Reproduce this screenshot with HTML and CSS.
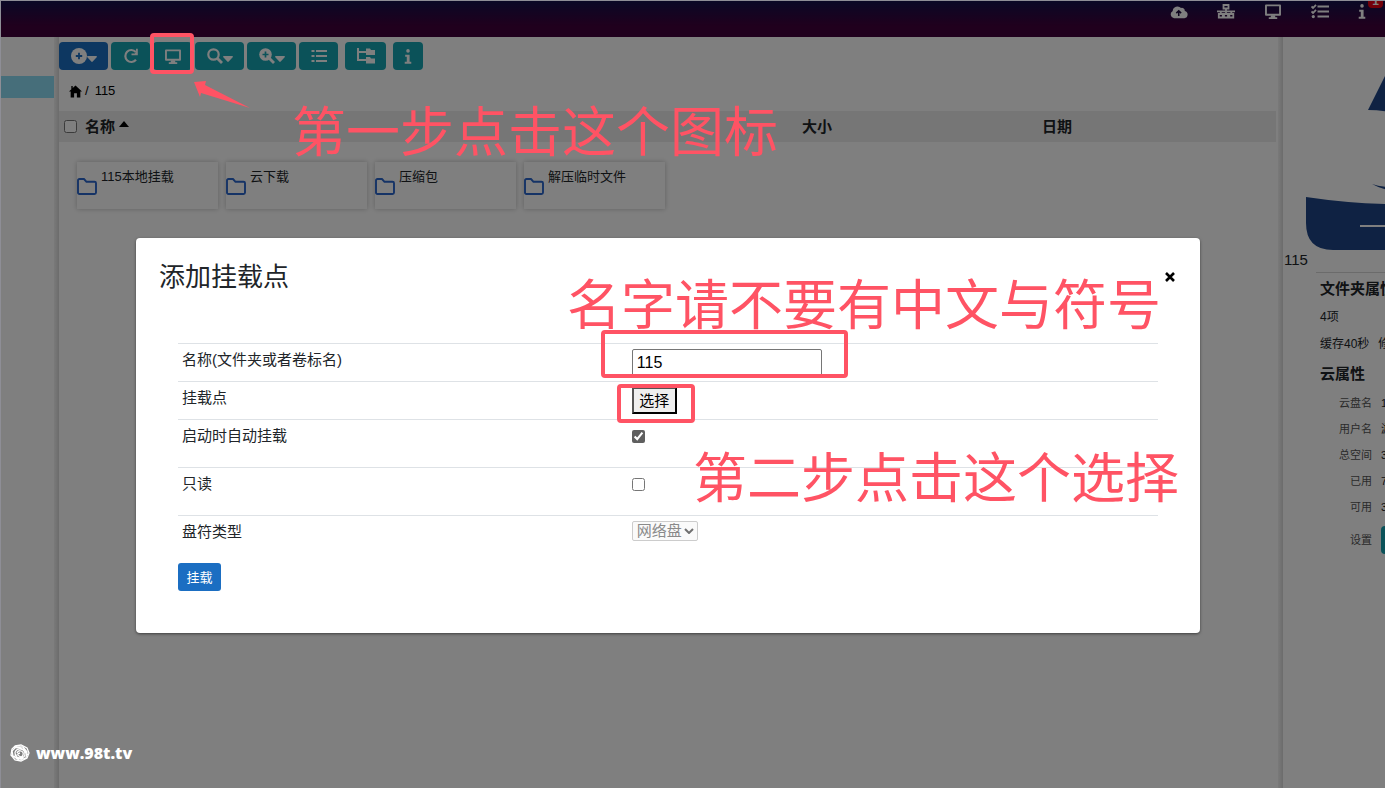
FILE: index.html
```
<!DOCTYPE html>
<html lang="zh-CN">
<head>
<meta charset="utf-8">
<title>添加挂载点</title>
<link rel="stylesheet" href="styles.css">
</head>
<body>
<svg class="defs" aria-hidden="true">
  <symbol id="i-monitor" viewBox="0 0 18 16"><path fill="none" stroke="currentColor" stroke-width="2" stroke-linejoin="round" d="M1.500 1.500h15v10h-15z"/><path fill="currentColor" d="M7 12h4l.6 2.200H13.500V16h-9v-1.800h1.900z"/></symbol>
  <symbol id="i-caret" viewBox="0 0 10 6"><path fill="currentColor" d="M.8 0h8.400c.7 0 1 .8.5 1.300L5.700 5.600c-.4.4-1 .4-1.400 0L.3 1.300C-.2.800.1 0 .8 0z"/></symbol>
  <symbol id="i-info" viewBox="0 0 8 16"><circle cx="4" cy="2" r="1.900" fill="currentColor"/><path fill="currentColor" d="M1 6h4.700v7.500H7.500v2.200H.5v-2.200h2.200V8.200H1z"/></symbol>
  <symbol id="i-folder" viewBox="0 0 20 17"><path fill="none" stroke="currentColor" stroke-width="1.900" stroke-linejoin="round" d="M1 2.500Q1 1 2.500 1H7l2.500 2.800h8Q19 3.800 19 5v9.500q0 1.500-1.500 1.500h-15Q1 16 1 14.500z"/></symbol>
</svg>
<div class="app">
  <header class="topbar">
    <nav class="topnav">
      <a href="#" aria-label="上传"><svg class="ic-cloud" viewBox="0 0 20 15"><path fill="currentColor" d="M16.500 6.300A3.300 3.300 0 0 0 12.300 3 5.400 5.400 0 0 0 3 6.300 4.400 4.400 0 0 0 4.500 14.500H16a4.200 4.200 0 0 0 .5-8.200z"/><path d="M9.700 12V6.500M7 8.800l2.700-2.600 2.700 2.600" fill="none" stroke="#1c0b3c" stroke-width="1.700"/></svg></a>
      <a href="#" aria-label="网络"><svg class="ic-18" viewBox="0 0 18 15"><g fill="none" stroke="currentColor" stroke-width="1.800"><path d="M6.500 1h5v3.500h-5zM1.800 10h4v3.500h-4zM7 10h4v3.500H7zM12.300 10h4v3.500h-4zM9 4.500V10M0 7.300h18M3.800 7.300V10M14.300 7.300V10"/></g></svg></a>
      <a href="#" aria-label="挂载"><svg class="ic-18"><use href="#i-monitor"/></svg></a>
      <a href="#" aria-label="任务"><svg class="ic-18" viewBox="0 0 18 15"><path fill="none" stroke="currentColor" stroke-width="1.800" d="M6.500 2.500H18M6.500 7.500H18M6.500 12.500H18M.5 2.500l1.500 1.500L5 .8M.5 7.500L2 9l3-3.200"/><circle cx="2.300" cy="12.600" r="1.600" fill="currentColor"/></svg></a>
      <a href="#" aria-label="信息" class="with-badge"><svg class="ic-info"><use href="#i-info"/></svg><span class="badge">1</span></a>
    </nav>
  </header>
  <div class="body">
    <aside class="tree"><div class="tree-active"></div></aside>
    <div class="splitter"></div>
    <main class="main">
      <div class="toolbar">
        <div class="tool-group">
          <button class="tool wide primary" aria-label="新建"><svg class="ic-16" viewBox="0 0 16 16"><circle cx="8" cy="8" r="8" fill="currentColor"/><path d="M8 4.800v6.400M4.800 8h6.400" stroke="#1b6ec2" stroke-width="1.800"/></svg><svg class="caret"><use href="#i-caret"/></svg></button>
          <button class="tool" aria-label="刷新"><svg class="ic-16" viewBox="0 0 16 16"><path d="M13 11.800A6 6 0 1 1 12.800 4" fill="none" stroke="currentColor" stroke-width="2.200"/><path fill="currentColor" d="M14.800.8v6.400H8.500V5.600h3.300l1.200-2.200V.8z"/></svg></button>
          <button class="tool" aria-label="挂载"><svg class="ic-18"><use href="#i-monitor"/></svg></button>
          <button class="tool wide" aria-label="搜索"><svg class="ic-16" viewBox="0 0 16 16"><circle cx="6.500" cy="6.500" r="5.200" fill="none" stroke="currentColor" stroke-width="2.200"/><path d="M10.500 10.500l4.500 4.500" stroke="currentColor" stroke-width="2.800"/></svg><svg class="caret"><use href="#i-caret"/></svg></button>
          <button class="tool wide" aria-label="缩放"><svg class="ic-16" viewBox="0 0 16 16"><circle cx="6.500" cy="6.500" r="6.300" fill="currentColor"/><path d="M6.500 3.500v6M3.500 6.500h6" stroke="#16a4b2" stroke-width="1.700"/><path d="M10.500 10.500l4.500 4.500" stroke="currentColor" stroke-width="2.800"/></svg><svg class="caret"><use href="#i-caret"/></svg></button>
          <button class="tool" aria-label="列表"><svg class="ic-16" viewBox="0 0 16 16"><path d="M5 3h11M5 8h11M5 13h11M.5 3h3M.5 8h3M.5 13h3" stroke="currentColor" stroke-width="2.200"/></svg></button>
        </div>
        <button class="tool" aria-label="目录树"><svg class="ic-tree" viewBox="0 0 18 16"><path d="M1 0v12h8M1 4h8" fill="none" stroke="currentColor" stroke-width="2"/><path fill="currentColor" d="M9 .5h4l1 1.500h4V7H9zM9 9h4l1 1.500h4v5H9z"/></svg></button>
        <button class="tool slim" aria-label="信息"><svg class="ic-info"><use href="#i-info"/></svg></button>
      </div>
      <nav class="crumbs"><a href="#" aria-label="主页"><svg class="ic-home" viewBox="0 0 14 13"><path d="M7 0l7 6.500h-1.800V13H8.500V8.500h-3V13H1.800V6.500H0L4 2.800V.5H2.500V4z"/></svg></a><span>/</span><a href="#">115</a></nav>
      <div class="list-head">
        <div class="col-name"><input type="checkbox" aria-label="全选"><span>名称</span><svg class="sort" viewBox="0 0 10 6"><path d="M0 6L5 0l5 6z"/></svg></div>
        <div>大小</div>
        <div>日期</div>
      </div>
      <div class="files">
        <div class="file"><svg><use href="#i-folder"/></svg><span>115本地挂载</span></div>
        <div class="file"><svg><use href="#i-folder"/></svg><span>云下载</span></div>
        <div class="file"><svg><use href="#i-folder"/></svg><span>压缩包</span></div>
        <div class="file"><svg><use href="#i-folder"/></svg><span>解压临时文件</span></div>
      </div>
    </main>
    <div class="splitter"></div>
    <aside class="details">
      <svg class="logo" viewBox="0 0 200 190"><path fill="#1e4587" d="M62 50L87 0v53Q75 50 62 50zM66 124q14 5 34 2v5q-20 1-34-7zM0 137q60 9 120 7t80-14v33q0 27-27 27H27Q0 190 0 163z"/><path d="M54 166h80" stroke="#fff" stroke-width="2"/></svg>
      <p class="item-name">115</p>
      <section class="props">
        <h2>文件夹属性</h2>
        <p>4项</p>
        <p><span>缓存40秒</span><span>修改</span></p>
        <h2>云属性</h2>
        <dl>
          <dt>云盘名</dt><dd>115</dd>
          <dt>用户名</dt><dd>游</dd>
          <dt>总空间</dt><dd>3</dd>
          <dt>已用</dt><dd>7</dd>
          <dt>可用</dt><dd>3</dd>
          <dt class="tall">设置</dt><dd class="tall"><button class="tool" aria-label="设置"></button></dd>
        </dl>
      </section>
    </aside>
  </div>
</div>

<div class="overlay">
  <form class="modal">
    <div class="modal-head">
      <h1>添加挂载点</h1>
      <button type="button" class="close" aria-label="关闭"><svg viewBox="0 0 10 10"><path d="M1 1l8 8M9 1l-8 8" stroke="#000" stroke-width="2.600"/></svg></button>
    </div>
    <table class="fields">
      <tr><th><label for="name">名称(文件夹或者卷标名)</label></th><td><input id="name" type="text" value="115"></td></tr>
      <tr><th><label for="pick">挂载点</label></th><td><button id="pick" type="button" class="pick">选择</button></td></tr>
      <tr class="roomy"><th><label for="auto">启动时自动挂载</label></th><td><input id="auto" type="checkbox" checked></td></tr>
      <tr class="roomy"><th><label for="ro">只读</label></th><td><input id="ro" type="checkbox"></td></tr>
      <tr class="roomy"><th><label for="kind">盘符类型</label></th><td><span class="select"><select id="kind" disabled><option>网络盘</option></select><svg viewBox="0 0 10 6"><path d="M1 1l4 4 4-4" fill="none" stroke="#707070" stroke-width="2"/></svg></span></td></tr>
    </table>
    <button type="button" class="submit">挂载</button>
  </form>
</div>

<div class="mark box-icon"></div>
<div class="mark box-name"></div>
<div class="mark box-pick"></div>
<svg class="arrow" viewBox="0 0 56 27"><path fill="#ff5364" d="M0 1l12-1-1 4 45 23L7 12l-1 4z"/></svg>
<p class="note note-one">第一步点击这个图标</p>
<p class="note note-name">名字请不要有中文与符号</p>
<p class="note note-two">第二步点击这个选择</p>
<div class="watermark"><svg viewBox="0 0 20 18"><g fill="none" stroke="#fff" stroke-width="1.300"><path d="M5 2l6-1 6 3 2 5-2 5-6 3-6-1-4-5 1-6z"/><path d="M2 7l4-4 7 0 4 5-1 6-7 2-6-4zM5 8q2-4 6-3t4 5-5 4-5-6M7 9q1-3 4-2t2 4-4 1 1-3M1 11l5 3 7 1M4 3l9 2 5 6M3 13l4-2"/></g></svg><span>www.98t.tv</span></div>
</body>
</html>
```
FILE: styles.css
```
* { box-sizing: border-box; }
body {
  margin: 0;
  position: relative;
  height: 100vh;
  overflow: hidden;
  font: 13px/20px "Liberation Sans", "Noto Sans CJK SC", sans-serif;
  color: #212529;
}
h1, h2, p, dl, dd { margin: 0; }
button, input, select { font-family: inherit; }
a { color: inherit; text-decoration: none; }
svg { display: block; flex: none; }
.defs { position: absolute; width: 0; height: 0; }

.app { display: flex; flex-direction: column; height: 100%; }
.topbar {
  height: 37px;
  flex: none;
  display: flex;
  justify-content: flex-end;
  background: linear-gradient(#12124c, #40003a 70%);
  color: #fff;
}
.topnav { display: flex; gap: 29px; padding: 3px 19px 0 0; height: 20px; align-items: center; }
.with-badge { position: relative; }
.badge {
  position: absolute;
  left: 10px;
  top: -11px;
  width: 15px;
  height: 15px;
  border-radius: 4px;
  background: #e60012;
  font: bold 12px/16px "Liberation Sans", sans-serif;
  text-align: center;
}
.ic-16 { width: 16px; height: 16px; }
.ic-18 { width: 18px; height: 15px; }
.ic-tree { width: 18px; height: 16px; }
.ic-cloud { width: 18px; height: 14px; }
.ic-info { width: 8px; height: 15px; }
.caret { width: 10px; height: 6px; margin-top: 5px; }

.body { flex: 1; display: flex; min-height: 0; }
.tree { width: 54px; flex: none; padding-top: 39px; }
.tree-active { height: 22px; background: #8ddcf5; }
.splitter { width: 5px; flex: none; background: linear-gradient(90deg, #f4f4f4, #d8d8d8); }
.main { flex: 1; min-width: 0; }
.main + .splitter { margin-left: 2px; }

.toolbar { display: flex; gap: 7px; padding-top: 5px; }
.tool-group { display: flex; gap: 3px; }
.tool {
  display: flex;
  align-items: center;
  justify-content: center;
  flex: none;
  width: 39px;
  height: 28px;
  padding: 0;
  border: 0;
  border-radius: 4px;
  background: #16a4b2;
  color: #fff;
}
.tool-group + .tool { width: 41px; }
.tool.wide { width: 49px; }
.tool.slim { width: 30px; }
.tool.primary { background: #1b6ec2; }

.crumbs { display: flex; align-items: center; gap: 3px; padding: 11px 10px 10px; color: #000; }
.crumbs span { margin-right: 3px; }
.ic-home { width: 13px; height: 13px; }

.list-head {
  display: grid;
  grid-template-columns: 743fr 240fr 234fr;
  height: 31px;
  align-items: center;
  background: #ececec;
  font-size: 15px;
  font-weight: bold;
}
.list-head input { width: 13px; height: 13px; margin: 0 4px 0 0; }
.col-name { display: flex; align-items: center; gap: 4px; padding-left: 5px; }
.sort { width: 10px; height: 6px; margin-bottom: 6px; }

.files { display: flex; flex-wrap: wrap; gap: 8px; padding: 20px 18px; }
.file {
  display: flex;
  gap: 4px;
  width: 141px;
  height: 47px;
  padding-top: 5px;
  box-shadow: 0 0 5px rgba(0, 0, 0, .25);
}
.file svg { width: 20px; height: 17px; margin-top: 11px; color: #2a66cc; }

.details { width: 102px; flex: none; overflow: hidden; white-space: nowrap; border-left: 1px solid #fff; }
.logo { width: 200px; height: 190px; margin: 23px 0 0 22px; }
.item-name { font-size: 15px; }
.props { margin: 2px 0 0 32px; padding: 6px 0 0 4px; border-top: 1px solid #d6d6d6; width: 240px; font-size: 12px; }
.props h2 { font-size: 15px; line-height: 20px; margin-bottom: 5px; }
.props p { line-height: 27px; }
.props p span { margin-right: 9px; }
.props p + h2 { margin-top: 6px; }
.props dl { display: grid; grid-template-columns: 52px 1fr; column-gap: 9px; padding-top: 1px; font-size: 11px; line-height: 26px; }
.props dt { text-align: right; color: #555; }
.props .tall { line-height: 40px; }
.props dd .tool { margin-top: 6px; }

.overlay {
  position: absolute;
  inset: 0;
  background: rgba(0, 0, 0, .5);
  border: 1px solid #8e8e96;
  border-width: 1px 0 0 1px;
  padding: 237px 185px 0 135px;
}
.modal {
  background: #fff;
  border-radius: 4px;
  box-shadow: 0 1px 3px rgba(0, 0, 0, .5);
  padding: 24px 24px 42px;
}
.modal-head { display: flex; justify-content: space-between; align-items: center; height: 30px; margin: 0 0 51px -1px; }
.modal h1 { font-size: 26px; line-height: 30px; font-weight: 400; }
.close { padding: 0; border: 0; background: none; margin-right: 1px; }
.close svg { width: 10px; height: 10px; }
.fields { width: calc(100% - 36px); margin: 0 18px; border-collapse: separate; border-spacing: 0; font-size: 15px; }
.fields th, .fields td { border-top: 1px solid #dee2e6; padding: 5px 3px; vertical-align: top; text-align: left; font-weight: 400; }
.fields th { width: 46%; padding-left: 4px; line-height: 22px; }
.roomy { height: 48px; }
.fields input[type="text"] { display: block; width: 190px; height: 27px; padding: 1px 4px; border: 1px solid #767676; border-radius: 2px; font-size: 16px; }
.fields input[type="checkbox"] { display: block; width: 13px; height: 13px; margin: 5px 0 4px; accent-color: #5f5f5f; }
.pick { display: block; width: 45px; height: 27px; padding: 0; border: 2px outset #000; background: #efefef; color: #000; font-size: 15px; line-height: 22px; }
.select { position: relative; display: block; width: 66px; height: 20px; }
.select select { appearance: none; width: 100%; height: 100%; padding: 0 4px; border: 1px solid #ccc; border-radius: 2px; background: #fafafa; color: #8a8a8a; font-size: 15px; line-height: 18px; opacity: 1; }
.select svg { position: absolute; right: 4px; top: 7px; width: 10px; height: 6px; }
.submit { display: block; width: 43px; height: 28px; margin: 0 18px; padding: 0 0 2px; border: 0; border-radius: 3px; background: #1b6ec2; color: #fff; font-size: 13px; }

.mark { position: absolute; border: 4px solid #ff5364; border-radius: 4px; }
.box-icon { left: 150px; top: 33px; width: 44px; height: 41px; }
.box-name { left: 601px; top: 330px; width: 247px; height: 48px; }
.box-pick { left: 617px; top: 384px; width: 78px; height: 39px; }
.arrow { position: absolute; left: 194px; top: 81px; width: 56px; height: 27px; }
.note { position: absolute; white-space: nowrap; color: #ff5364; font: 54px/60px "Noto Sans CJK SC", sans-serif; }
.note-one { left: 292px; top: 99px; }
.note-name { left: 567px; top: 272px; }
.note-two { left: 693px; top: 445px; }
.watermark { position: absolute; left: 10px; top: 743px; display: flex; align-items: center; gap: 6px; color: #fff; font: 800 16px/20px "Open Sans", sans-serif; }
.watermark svg { width: 20px; height: 18px; }
```
